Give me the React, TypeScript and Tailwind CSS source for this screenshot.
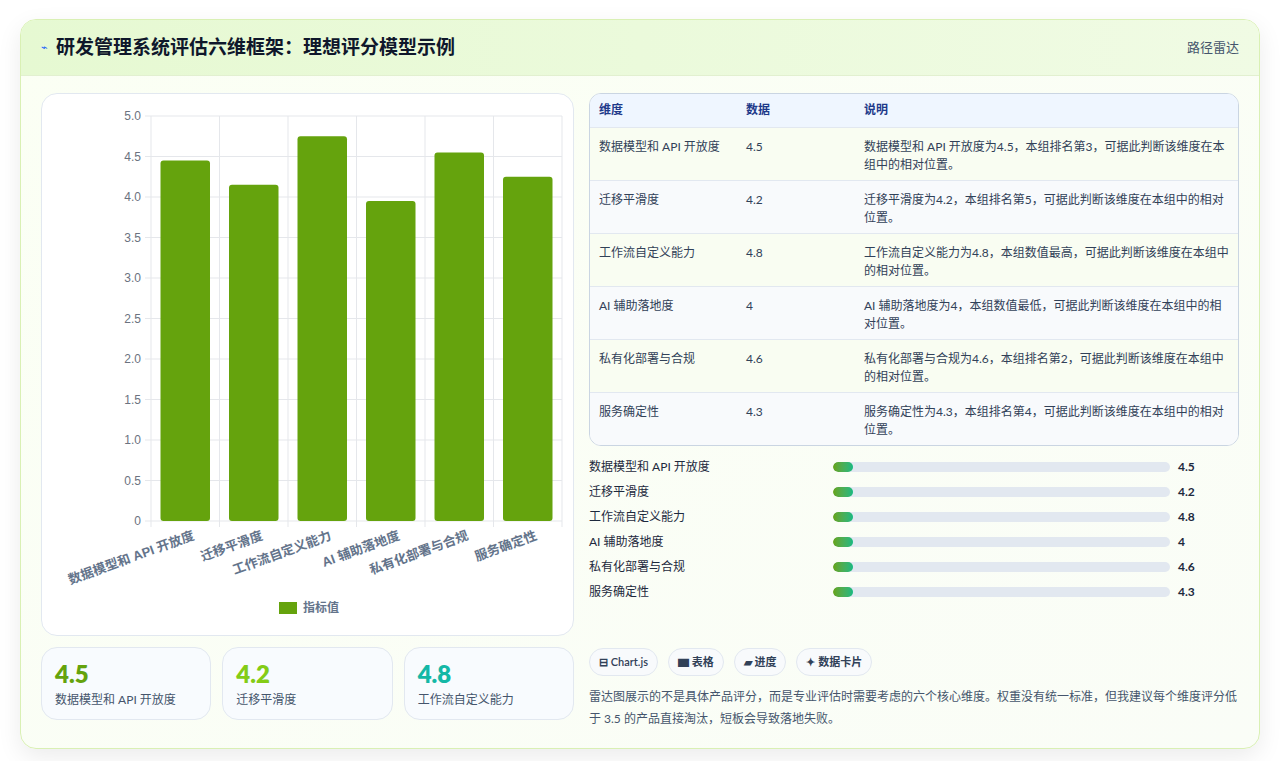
import { useState } from "react";

interface Dim {
  name: string;
  value: number;
  note: string;
}

const dims: Dim[] = [
  { name: "数据模型和 API 开放度", value: 4.5, note: "数据模型和 API 开放度为4.5，本组排名第3，可据此判断该维度在本组中的相对位置。" },
  { name: "迁移平滑度", value: 4.2, note: "迁移平滑度为4.2，本组排名第5，可据此判断该维度在本组中的相对位置。" },
  { name: "工作流自定义能力", value: 4.8, note: "工作流自定义能力为4.8，本组数值最高，可据此判断该维度在本组中的相对位置。" },
  { name: "AI 辅助落地度", value: 4, note: "AI 辅助落地度为4，本组数值最低，可据此判断该维度在本组中的相对位置。" },
  { name: "私有化部署与合规", value: 4.6, note: "私有化部署与合规为4.6，本组排名第2，可据此判断该维度在本组中的相对位置。" },
  { name: "服务确定性", value: 4.3, note: "服务确定性为4.3，本组排名第4，可据此判断该维度在本组中的相对位置。" },
];

const shown = [4.45, 4.15, 4.75, 3.95, 4.55, 4.25];

function BarChart() {
  // plot area inside svg: x 109..520, y 22..427
  const left = 109;
  const right = 520;
  const top = 22;
  const bottom = 427;
  const colW = (right - left) / 6;
  const ticks = [0, 0.5, 1, 1.5, 2, 2.5, 3, 3.5, 4, 4.5, 5];
  const y = (v: number) => bottom - (v / 5) * (bottom - top);
  return (
    <svg width="531" height="541" className="block">
      {ticks.map((t) => (
        <g key={t}>
          <line x1={left - 6} x2={right} y1={y(t)} y2={y(t)} stroke="#e5e7eb" />
          <text x={left - 10} y={y(t) + 4} textAnchor="end" fontSize="12" fill="#6b7280" fontFamily="Liberation Sans, sans-serif">
            {t === 0 ? "0" : t.toFixed(1)}
          </text>
        </g>
      ))}
      {Array.from({ length: 7 }).map((_, i) => (
        <line key={i} x1={left + i * colW} x2={left + i * colW} y1={top} y2={bottom + 6} stroke="#e5e7eb" />
      ))}
      {shown.map((v, i) => (
        <rect key={i} x={left + i * colW + 9.5} y={y(v)} width={colW - 19} height={bottom - y(v)} rx="3" fill="#65a30d" />
      ))}
      {dims.map((d, i) => {
        const cx = left + i * colW + colW / 2 + 10;
        return (
          <text
            key={d.name}
            x={cx}
            y={bottom + 18}
            textAnchor="end"
            fontSize="13"
            fontWeight="700"
            fill="#64748b"
            transform={`rotate(-20 ${cx} ${bottom + 18})`}
            fontFamily="Liberation Sans, 'Noto Sans CJK SC', sans-serif"
          >
            {d.name}
          </text>
        );
      })}
      <rect x="237" y="508" width="18" height="12" fill="#65a30d" />
      <text x="261" y="518" fontSize="12" fill="#64748b" fontWeight="700" fontFamily="Liberation Sans, 'Noto Sans CJK SC', sans-serif">
        指标值
      </text>
    </svg>
  );
}

export default function App() {
  const [hover, setHover] = useState<number | null>(null);

  return (
    <div
      className="min-h-screen bg-white px-5 pt-[19px] pb-5"
      style={{ fontFamily: "Lato, 'Noto Sans CJK SC', sans-serif" }}
    >
      <div className="w-[1240px] rounded-2xl border border-[#d9f0b4] bg-gradient-to-br from-[#fbfff4] to-[#fafdf7] shadow-[0_8px_24px_rgba(0,0,0,0.08)] overflow-hidden">
        {/* Header */}
        <div className="flex items-center justify-between h-14 px-5 border-b border-[#e2f0d0] bg-gradient-to-r from-[#e6f9d2] to-[#f0fbe4]">
          <div className="flex items-center gap-2">
            <span className="text-[11px] text-blue-600">⌁</span>
            <h1 className="text-[19px] font-bold text-slate-900">研发管理系统评估六维框架：理想评分模型示例</h1>
          </div>
          <span className="text-[13px] text-slate-600">路径雷达</span>
        </div>

        {/* Body */}
        <div className="flex gap-[15px] px-5 pt-[17px] pb-[18px]">
          {/* Left */}
          <div className="w-[533px] flex flex-col gap-[11px]">
            <div className="h-[543px] rounded-2xl border border-slate-200 bg-white">
              <BarChart />
            </div>
            <div className="grid grid-cols-3 gap-[11px]">
              {[
                { v: "4.5", c: "text-[#65a30d]", n: "数据模型和 API 开放度" },
                { v: "4.2", c: "text-[#84cc16]", n: "迁移平滑度" },
                { v: "4.8", c: "text-[#14b8a6]", n: "工作流自定义能力" },
              ].map((s) => (
                <div key={s.v} className="h-[73px] rounded-2xl border border-slate-200 bg-[#f8fbfe] px-[13px] pt-3">
                  <div className={`text-[24px] leading-7 font-extrabold ${s.c}`}>{s.v}</div>
                  <div className="mt-[3px] text-[12px] text-slate-600">{s.n}</div>
                </div>
              ))}
            </div>
          </div>

          {/* Right */}
          <div className="flex-1 flex flex-col">
            <div className="rounded-xl border border-slate-300 overflow-hidden bg-white">
              <table className="w-full text-[12px] text-slate-700">
                <thead>
                  <tr className="bg-[#eff6ff] text-[#1e3a8a] h-[33px]">
                    <th className="text-left font-semibold pl-[9px] w-[156px]">维度</th>
                    <th className="text-left font-semibold w-[118px]">数据</th>
                    <th className="text-left font-semibold">说明</th>
                  </tr>
                </thead>
                <tbody>
                  {dims.map((d, i) => (
                    <tr
                      key={d.name}
                      onMouseEnter={() => setHover(i)}
                      onMouseLeave={() => setHover(null)}
                      className={`h-[53px] align-top border-t border-slate-200 ${i % 2 === 0 ? "bg-[#f9fdf2]" : "bg-[#f8fafc]"} ${hover === i ? "bg-[#f1f8e6]" : ""}`}
                    >
                      <td className="pl-[9px] pt-[10px]">{d.name}</td>
                      <td className="pt-[10px]">{d.value}</td>
                      <td className="pt-[10px] pr-2 leading-[18px]">{d.note}</td>
                    </tr>
                  ))}
                </tbody>
              </table>
            </div>

            <div className="mt-[12px] flex flex-col gap-[7px]">
              {dims.map((d) => (
                <div key={d.name} className="flex items-center h-[18px] text-[12px]">
                  <span className="w-[244px] text-slate-800">{d.name}</span>
                  <div className="w-[337px] h-[10px] rounded-full bg-[#e2e8f0] overflow-hidden">
                    <div className="h-full w-[20px] rounded-full bg-gradient-to-r from-[#65a30d] to-[#10b981]" />
                  </div>
                  <span className="ml-[8px] font-bold text-slate-800">{d.value}</span>
                </div>
              ))}
            </div>

            <div className="mt-[47px] flex gap-[10px]">
              {["⊟ Chart.js", "▆ 表格", "▰ 进度", "✦ 数据卡片"].map((t) => (
                <span key={t} className="h-[28px] px-[9px] flex items-center rounded-full border border-slate-200 bg-[#f8fafc] text-[11px] font-semibold text-slate-700">
                  {t}
                </span>
              ))}
            </div>

            <p className="mt-[10px] text-[12px] leading-[22px] text-slate-600">
              雷达图展示的不是具体产品评分，而是专业评估时需要考虑的六个核心维度。权重没有统一标准，但我建议每个维度评分低于 3.5 的产品直接淘汰，短板会导致落地失败。
            </p>
          </div>
        </div>
      </div>
    </div>
  );
}
